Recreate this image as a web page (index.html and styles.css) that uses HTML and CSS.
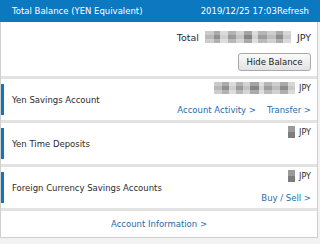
FILE: index.html
```html
<!DOCTYPE html>
<html>
<head>
  <meta charset="UTF-8">
  <title>Total Balance</title>
  <link rel="stylesheet" href="styles.css">
</head>
<body>

  <div class="head">
    <span>Total Balance (YEN Equivalent)</span>
    <span>2019/12/25 17:03Refresh</span>
  </div>

  <div class="card">
    <div class="total">
      <div class="total-line">
        <span>Total</span>
        <span class="blur blur-lg"></span>
        <span>JPY</span>
      </div>
      <button class="btn">Hide Balance</button>
    </div>

    <div class="acct">
      <div class="acct-name">Yen Savings Account</div>
      <div class="acct-side">
        <div class="amt"><span class="blur blur-md"></span><span class="cur">JPY</span></div>
        <div class="links">
          <a href="#">Account Activity &gt;</a>
          <a href="#">Transfer &gt;</a>
        </div>
      </div>
    </div>

    <div class="acct">
      <div class="acct-name">Yen Time Deposits</div>
      <div class="acct-side">
        <div class="amt"><span class="blur blur-sm"></span><span class="cur">JPY</span></div>
      </div>
    </div>

    <div class="acct">
      <div class="acct-name">Foreign Currency Savings Accounts</div>
      <div class="acct-side">
        <div class="amt"><span class="blur blur-sm"></span><span class="cur">JPY</span></div>
        <div class="links">
          <a href="#">Buy / Sell &gt;</a>
        </div>
      </div>
    </div>

    <div class="foot">
      <a href="#">Account Information &gt;</a>
    </div>
  </div>

</body>
</html>
```

FILE: styles.css
```css
body { margin: 0; background: #f2f2f2; color: #2b2b2b; font-family: "DejaVu Sans", Verdana, sans-serif; font-size: 8.5px; }
a { color: #1f6cab; text-decoration: none; }

.head { display: flex; justify-content: space-between; align-items: center; height: 22px; padding: 0 11px 0 12px; background: #0b78bf; color: white; }

.card { width: 316px; background: white; border: 1px solid #cfcfcf; border-top: none; }

.total { display: flex; flex-direction: column; align-items: flex-end; padding: 9px 6px 5px 0; }
.total-line { display: flex; align-items: center; gap: 6px; height: 12px; font-size: 9.5px; }
.btn { margin-top: 10px; width: 73px; height: 18px; padding: 0; font: inherit; color: #222; background: linear-gradient(#fafafa, #e2e2e2); border: 1px solid #a9a9a9; border-radius: 3px; }

.acct { display: flex; justify-content: space-between; border-top: 3px solid #e2e2e2; padding-right: 6px; }
.acct-name { display: flex; align-items: center; margin: 5px 0; min-height: 31px; padding-left: 8px; border-left: 3px solid #0b78bf; }
.acct-side { display: flex; flex-direction: column; justify-content: space-between; align-items: flex-end; padding: 3px 0 4px; }
.amt { display: flex; align-items: center; height: 12px; }
.cur { margin-left: 4px; font-size: 8px; }
.links { display: flex; gap: 11px; height: 12px; align-items: center; }

.foot { display: flex; justify-content: center; align-items: center; height: 26px; border-top: 3px solid #e2e2e2; }

.blur { display: inline-block; height: 12px; background:
  linear-gradient(180deg, rgba(255,255,255,0.25) 0 33%, rgba(0,0,0,0) 33% 66%, rgba(255,255,255,0.3) 66%),
  linear-gradient(90deg, #b9b9b9 0 10%, #8f8f8f 10% 18%, #cfcfcf 18% 27%, #9a9a9a 27% 36%, #c4c4c4 36% 45%, #858585 45% 55%, #d2d2d2 55% 62%, #9d9d9d 62% 72%, #bdbdbd 72% 82%, #8c8c8c 82% 91%, #c9c9c9 91%); }
.blur-lg { width: 86px; }
.blur-md { width: 81px; }
.blur-sm { width: 7px; background: linear-gradient(#9a9a9a 0 50%, #7d7d7d 50%); }
```
